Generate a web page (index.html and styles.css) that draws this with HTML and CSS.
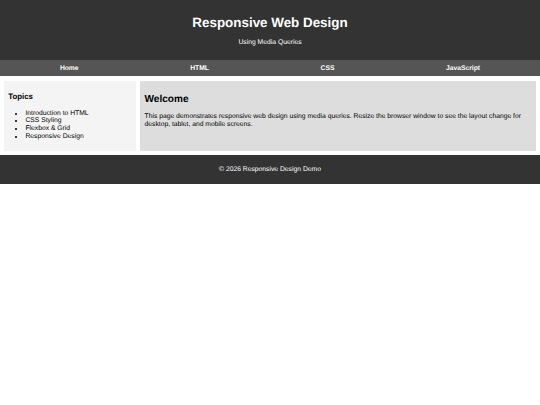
FILE: index.html
```html
<!DOCTYPE html>
<html lang="en">
<head>
<meta charset="utf-8">
<title>Responsive Web Design</title>
<link rel="stylesheet" href="styles.css">
</head>
<body>
<header class="site-header">
  <h1 class="site-title">Responsive Web Design</h1>
  <p class="site-subtitle">Using Media Queries</p>
</header>
<nav class="site-nav">
  <a href="#" class="nav-link">Home</a>
  <a href="#" class="nav-link">HTML</a>
  <a href="#" class="nav-link">CSS</a>
  <a href="#" class="nav-link">JavaScript</a>
</nav>
<main class="layout">
  <aside class="sidebar">
    <h3 class="sidebar-title">Topics</h3>
    <ul class="topic-list">
      <li>Introduction to HTML</li>
      <li>CSS Styling</li>
      <li>Flexbox &amp; Grid</li>
      <li>Responsive Design</li>
    </ul>
  </aside>
  <section class="content">
    <h2 class="content-title">Welcome</h2>
    <p class="content-text">This page demonstrates responsive web design using media queries. Resize the browser window to see the layout change for desktop, tablet, and mobile screens.</p>
  </section>
</main>
<footer class="site-footer">
  <p class="footer-text">&copy; 2026 Responsive Design Demo</p>
</footer>
</body>
</html>
```

FILE: styles.css
```css
html, body {
  margin: 0;
  padding: 0;
  background: #ffffff;
}

body {
  font-family: "Liberation Sans", Arial, sans-serif;
  font-size: 6.76px;
  line-height: 7.59px;
  color: #000;
  text-rendering: geometricPrecision;
  -webkit-font-smoothing: antialiased;
}

.site-header {
  background: #333333;
  color: #ffffff;
  text-align: center;
  padding: 6.6px 0;
}

.site-title {
  font-size: 13.4px;
  line-height: 15.18px;
  margin: 8.8px 0;
  font-weight: bold;
}

.site-subtitle {
  margin: 6.6px 0;
}

.site-nav {
  background: #555555;
  display: flex;
  justify-content: space-around;
  padding: 5px 4.1px 3.2px;
}

.nav-link {
  color: #ffffff;
  font-weight: bold;
  text-decoration: none;
}

.layout {
  display: grid;
  grid-template-columns: 1fr 3fr;
  gap: 4.3px;
  padding: 5px 3.7px 3.6px;
}

.sidebar {
  background: #f4f4f4;
  padding: 4.5px;
}

.sidebar-title {
  font-size: 7.85px;
  line-height: 8.88px;
  margin: 7.72px 0;
}

.topic-list {
  margin: 6.6px 0;
  padding-left: 17.3px;
}

.content {
  background: #dddddd;
  padding: 4.5px;
}

.content-title {
  font-size: 10.05px;
  line-height: 11.39px;
  margin: 8.2px 0;
}

.content-text {
  margin: 6.6px 0;
}

.site-footer {
  background: #333333;
  color: #ffffff;
  text-align: center;
  padding: 4.1px 0;
}

.footer-text {
  margin: 6.6px 0;
}
```
